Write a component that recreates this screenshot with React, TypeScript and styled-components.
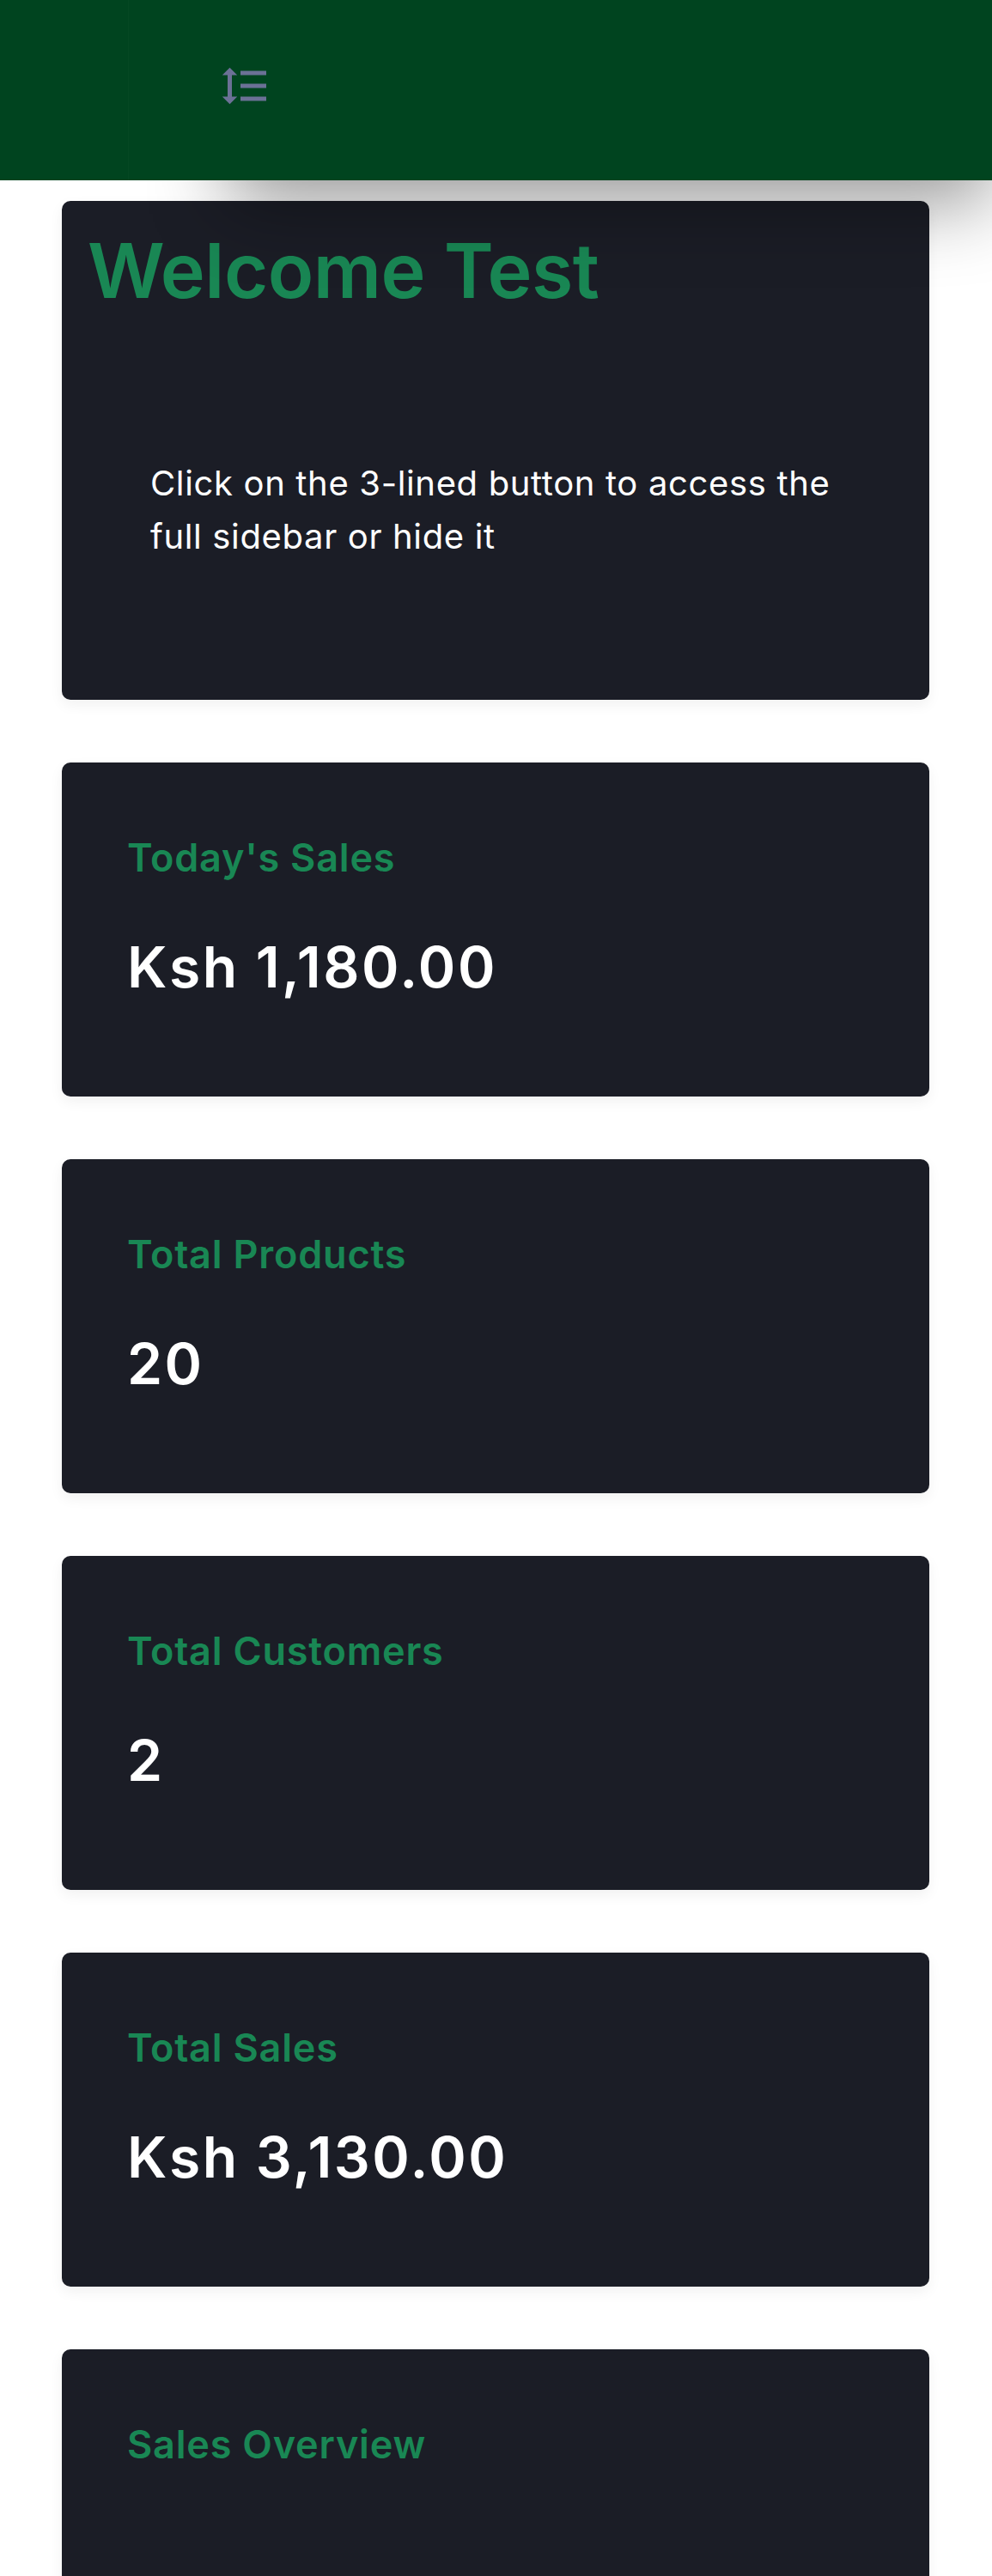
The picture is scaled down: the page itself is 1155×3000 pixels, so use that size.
import React from "react";
import styled, { createGlobalStyle } from "styled-components";
import { MdFormatLineSpacing } from "react-icons/md";

const GlobalStyle = createGlobalStyle`
  html, body {
    margin: 0;
    padding: 0;
    background: #ffffff;
  }
  body {
    font-family: Inter, "Noto Sans", "Liberation Sans", sans-serif;
    -webkit-font-smoothing: antialiased;
  }
  * { box-sizing: border-box; }
`;

const Header = styled.header`
  position: relative;
  z-index: 2;
  height: 210px;
`;

/* Decorative layer that casts the soft shadow spilling below the top bar */
const ShadowCaster = styled.div`
  position: absolute;
  top: 0;
  bottom: 0;
  left: 265px;
  right: 0;
  box-shadow: 0 25px 90px rgba(0, 0, 0, 0.42);
`;

const HeaderBar = styled.div`
  position: relative;
  display: flex;
  align-items: flex-start;
  height: 100%;
  background: #00441f;
`;

const Brand = styled.div`
  width: 150px;
  height: 100%;
  border-right: 1px solid rgba(255, 255, 255, 0.02);
`;

const ToggleButton = styled.button`
  display: flex;
  align-items: center;
  justify-content: center;
  width: 60px;
  height: 60px;
  margin: 70px 0 0 105px;
  padding: 0;
  border: none;
  background: transparent;
  color: #6b7196;
  cursor: pointer;
`;

const Main = styled.main`
  display: flex;
  flex-direction: column;
  gap: 73px;
  padding: 24px 73px 80px 72px;
`;

const Card = styled.section`
  background: #1b1d26;
  border-radius: 10px;
  box-shadow: 0 6px 16px rgba(0, 0, 0, 0.06);
`;

const WelcomeCard = styled(Card)`
  height: 581px;
  padding: 28px 30px 0 30px;
`;

const WelcomeTitle = styled.h1`
  margin: 0;
  font-size: 88px;
  line-height: 106px;
  font-weight: 600;
  color: #198754;
  letter-spacing: -0.5px;
`;

const WelcomeText = styled.p`
  margin: 164px 0 0 0;
  padding: 0 60px 0 73px;
  font-size: 40px;
  line-height: 62px;
  font-weight: 400;
  letter-spacing: 0.65px;
  color: #ffffff;
`;

const StatCard = styled(Card)<{ $tall?: boolean }>`
  display: flex;
  flex-direction: column;
  gap: 60px;
  min-height: ${(p) => (p.$tall ? "600px" : "389px")};
  padding: 84px 76px 0 76px;
`;

const StatLabel = styled.h2`
  margin: 0;
  font-size: 45px;
  line-height: 54px;
  font-weight: 600;
  letter-spacing: 0.8px;
  color: #198754;
`;

const StatValue = styled.div`
  font-size: 66px;
  line-height: 80px;
  font-weight: 600;
  letter-spacing: 2.5px;
  color: #ffffff;
`;

const stats = [
  { label: "Today's Sales", value: "Ksh 1,180.00" },
  { label: "Total Products", value: "20" },
  { label: "Total Customers", value: "2" },
  { label: "Total Sales", value: "Ksh 3,130.00" },
];

export default function App() {
  return (
    <>
      <GlobalStyle />
      <Header>
        <ShadowCaster />
        <HeaderBar>
          <Brand />
          <ToggleButton aria-label="Toggle sidebar">
            <MdFormatLineSpacing size={60} />
          </ToggleButton>
        </HeaderBar>
      </Header>
      <Main>
        <WelcomeCard>
          <WelcomeTitle>Welcome Test</WelcomeTitle>
          <WelcomeText>
            Click on the 3-lined button to access the full sidebar or hide it
          </WelcomeText>
        </WelcomeCard>
        {stats.map((s) => (
          <StatCard key={s.label}>
            <StatLabel>{s.label}</StatLabel>
            <StatValue>{s.value}</StatValue>
          </StatCard>
        ))}
        <StatCard $tall>
          <StatLabel>Sales Overview</StatLabel>
        </StatCard>
      </Main>
    </>
  );
}
